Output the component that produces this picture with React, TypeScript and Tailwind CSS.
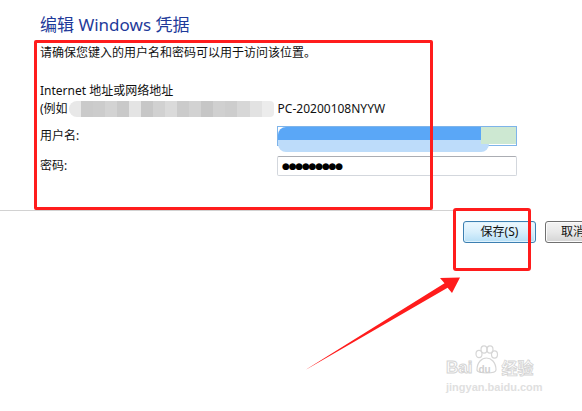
import React from 'react';

const font = "font-['Noto_Sans','Noto_Sans_CJK_SC',sans-serif]";

// mosaic cells that blur out the address
const mosaic = [
    '#e8e8e8', '#cacaca', '#cccccc', '#d3d3d3', '#c9c9c9', '#e4e4e4', '#c7c7c7', '#d1d1d1',
    '#dadada', '#cbcbcb', '#d2d2d2', '#c6c6c6', '#d0d0d0', '#cdcdcd', '#d7d7d7', '#e2e2e2', '#ececec',
];

const Paw: React.FC = () => (
    <svg width="26" height="30" viewBox="0 0 26 30" fill="none" stroke="#d6d6d6" strokeWidth="1.2">
        <ellipse cx="6" cy="9" rx="3" ry="3.6" />
        <ellipse cx="11" cy="4.5" rx="3" ry="3.6" />
        <ellipse cx="17" cy="4.5" rx="3" ry="3.6" />
        <ellipse cx="21.5" cy="9.5" rx="3" ry="3.6" />
        <path d="M4 25 C4 17 9 13 13.5 13 C18 13 23 17 23 25 C23 29 4 29 4 25 Z" />
    </svg>
);

export default function App() {
    return (
        <div className={`relative w-[582px] h-[411px] overflow-hidden bg-white text-[#111] ${font}`}>
            {/* Dialog body */}
            <div className="pl-[40px] pt-[13px]">
                <h1 className="text-[17px] leading-[24px] text-[#1e3a9a]">编辑 Windows 凭据</h1>
                <p className="mt-[7px] text-[12px] leading-[18px]">请确保您键入的用户名和密码可以用于访问该位置。</p>
                <p className="mt-[20px] text-[12px] leading-[18px]">Internet 地址或网络地址</p>
                <div className="flex items-center h-[18px] text-[12px] leading-[18px]">
                    <span>(例如</span>
                    <div className="ml-[1px] w-[205px] h-[16px] flex overflow-hidden rounded-l-[8px] rounded-r-[4px]">
                        {mosaic.map((c, i) => (
                            <div key={i} className="flex-1 h-full" style={{ backgroundColor: c }} />
                        ))}
                    </div>
                    <span className="ml-[4px]">PC-20200108NYYW</span>
                </div>

                <div className="mt-[8px] flex items-center">
                    <span className="w-[237px] text-[12px] leading-[18px]">用户名:</span>
                    <div className="relative w-[240px] h-[20px] border border-[#7eb4ea] bg-white">
                        {/* blurred user name */}
                        <div className="absolute left-[0px] top-[0px] w-[211px] h-[25px] rounded-l-[8px] rounded-r-[8px] overflow-hidden flex flex-col">
                            <div className="h-[13px] bg-[#5aa7f7]" />
                            <div className="flex-1 bg-[#bddcfa]" />
                        </div>
                        <div className="absolute left-[203px] top-[0px] w-[35px] h-[17px] bg-[#cde8d2]" />
                    </div>
                </div>

                <div className="mt-[10px] flex items-center">
                    <span className="w-[237px] text-[12px] leading-[18px]">密码:</span>
                    <div className="w-[240px] h-[20px] border border-[#d3d7dd] border-t-[#abadb3] rounded-[2px] bg-white flex items-center pl-[4px]">
                        <span className="text-[9px] leading-none tracking-[-1.2px] text-black font-['DejaVu_Sans',sans-serif]">●●●●●●●●●</span>
                    </div>
                </div>
            </div>

            {/* Separator */}
            <div className="mt-[34px] w-[455px] h-px bg-[#d2d2d2]" />

            {/* Buttons */}
            <div className="mt-[10px] pl-[463px] flex gap-[9px] text-[12px]">
                <button className="shrink-0 w-[73px] h-[22px] rounded-[3px] border border-[#3c7fb1] bg-gradient-to-b from-[#edf8fe] via-[#d8effc] to-[#b6dff6] shadow-[inset_0_0_0_1px_#dff2fd]">
                    保存(S)
                </button>
                <button className="shrink-0 w-[73px] h-[22px] rounded-[3px] border border-[#707070] bg-gradient-to-b from-[#f4f4f4] via-[#e8e8e8] to-[#d4d4d4] shadow-[inset_0_0_0_1px_#fbfbfb] text-left pl-[15px]">
                    取消
                </button>
            </div>

            {/* Red annotations */}
            <div className="absolute left-[34px] top-[40px] w-[399px] h-[170px] border-[3px] border-[#ff1c1c] rounded-[2px] pointer-events-none" />
            <div className="absolute left-[453px] top-[208px] w-[78px] h-[63px] border-[3px] border-[#ff1c1c] rounded-[3px] pointer-events-none" />
            <svg className="absolute left-0 top-0 pointer-events-none" width="582" height="411" viewBox="0 0 582 411">
                <polygon
                    points="306,369.5 444.5,283.2 440,278 460,277.5 452,293 447.6,287.8 308,368.5"
                    fill="#ff1c1c"
                />
            </svg>

            {/* Watermark */}
            <div className="absolute left-[446px] top-[345px] flex flex-col text-[#dcdcdc] pointer-events-none">
                <div className="flex items-end h-[32px]">
                    <span className="text-[17px] leading-[18px] font-bold font-['Liberation_Sans',sans-serif] text-white [-webkit-text-stroke:1px_#d4d4d4]">Bai</span>
                    <div className="relative w-[27px] h-[32px] ml-[1px]">
                        <div className="absolute left-0 top-0"><Paw /></div>
                        <span className="absolute left-[5px] top-[20px] text-[10px] leading-[10px] font-bold text-[#d0d0d0] font-['Liberation_Sans',sans-serif]">du</span>
                    </div>
                    <span className="ml-[1px] text-[16px] leading-[18px] font-bold text-white [-webkit-text-stroke:0.8px_#d4d4d4]">经验</span>
                </div>
                <span className="mt-[4px] text-[11px] leading-[12px] font-bold text-[#e0e0e0] font-['Liberation_Sans',sans-serif]">jingyan.baidu.com</span>
            </div>
        </div>
    );
}
